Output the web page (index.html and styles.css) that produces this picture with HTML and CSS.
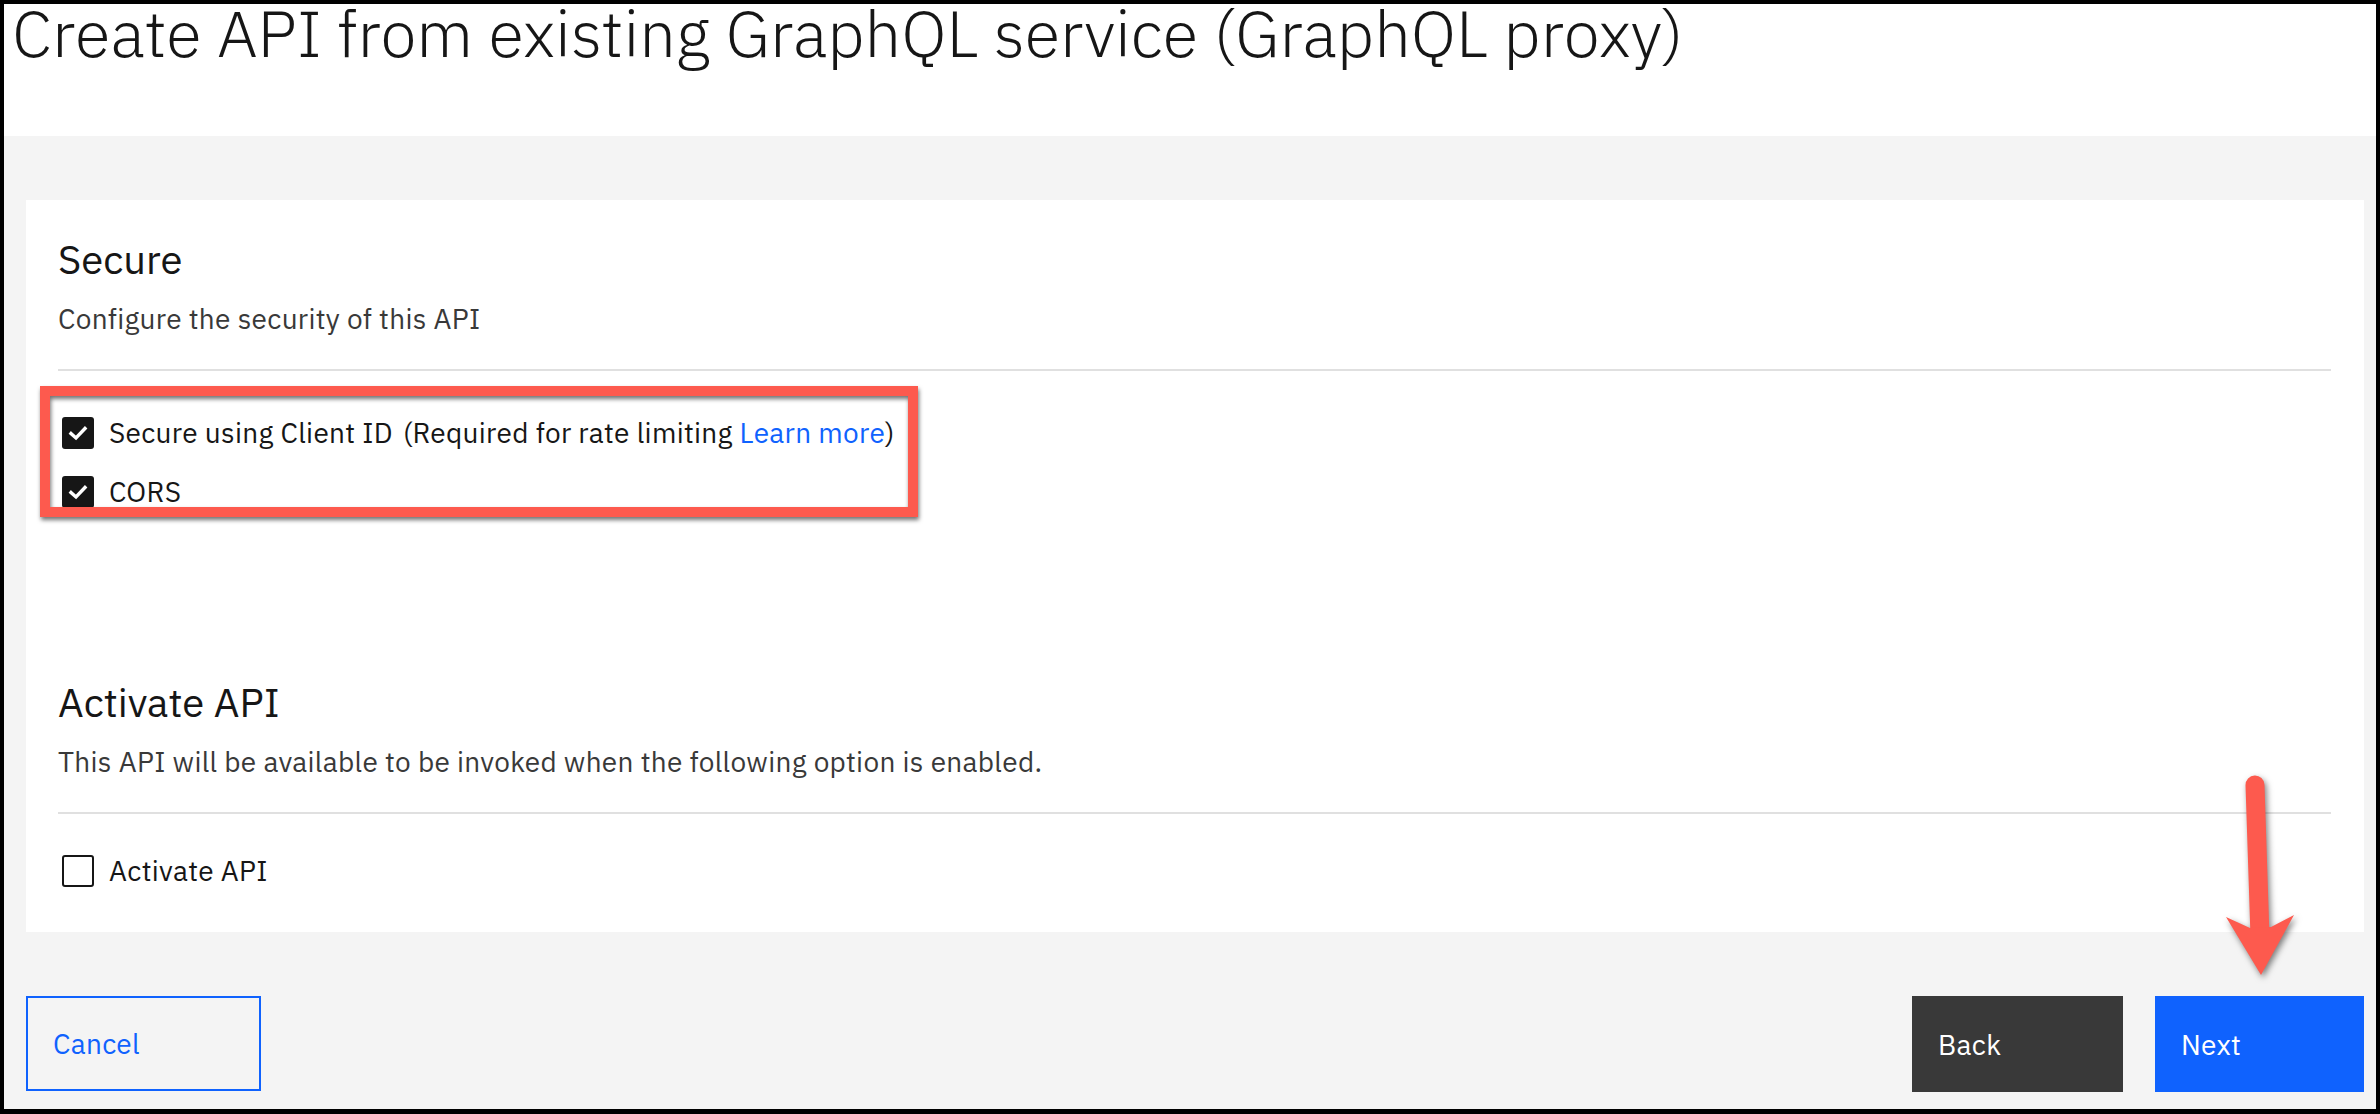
FILE: index.html
```html
<!DOCTYPE html>
<html lang="en">
<head>
<meta charset="utf-8">
<title>Create API from existing GraphQL service (GraphQL proxy)</title>
<link rel="stylesheet" href="styles.css">
</head>
<body>
<div class="frame">
  <header class="header">
    <h1 class="title">Create API from existing GraphQL service (GraphQL proxy)</h1>
  </header>
  <main class="main">
    <section class="card">
      <div class="section">
        <h2 class="heading">Secure</h2>
        <p class="desc">Configure the security of this API</p>
        <hr class="rule">
        <div class="options">
          <label class="check">
            <span class="box checked"><svg viewBox="0 0 32 32" width="32" height="32"><polyline points="9,16.5 14,21 23,11.5" fill="none" stroke="#fff" stroke-width="3.4" stroke-linecap="square"/></svg></span>
            <span class="label-text">Secure using Client ID<span class="note">(Required for rate limiting <a class="link" href="#">Learn more</a>)</span></span>
          </label>
          <label class="check">
            <span class="box checked"><svg viewBox="0 0 32 32" width="32" height="32"><polyline points="9,16.5 14,21 23,11.5" fill="none" stroke="#fff" stroke-width="3.4" stroke-linecap="square"/></svg></span>
            <span class="label-text">CORS</span>
          </label>
        </div>
      </div>
      <div class="section section-two">
        <h2 class="heading">Activate API</h2>
        <p class="desc">This API will be available to be invoked when the following option is enabled.</p>
        <hr class="rule">
        <div class="options options-two">
          <label class="check">
            <span class="box"></span>
            <span class="label-text">Activate API</span>
          </label>
        </div>
      </div>
    </section>
    <div class="actions">
      <button class="btn btn-ghost" type="button">Cancel</button>
      <div class="actions-right">
        <button class="btn btn-secondary" type="button">Back</button>
        <button class="btn btn-primary" type="button">Next</button>
      </div>
    </div>
  </main>
  <div class="highlight"></div>
  <svg class="arrow" width="90" height="225" viewBox="0 0 90 225">
    <line x1="35" y1="20" x2="40" y2="172" stroke="#fd5a4e" stroke-width="19" stroke-linecap="round"/>
    <polygon points="6,152 30,163 51,162 74,150 41,210" fill="#fd5a4e"/>
  </svg>
</div>
</body>
</html>
```

FILE: styles.css
```css
* { box-sizing: border-box; }

html, body {
  margin: 0;
  padding: 0;
  background: #000;
}

body {
  font-family: "IBM Plex Sans", Roboto, "Liberation Sans", sans-serif;
  color: #161616;
}

.frame {
  position: relative;
  width: 2380px;
  height: 1114px;
  border-style: solid;
  border-color: #000;
  border-width: 4px 4px 5px 4px;
  display: flex;
  flex-direction: column;
  background: #f4f4f4;
}

.header {
  height: 132px;
  background: #fff;
  padding-left: 8px;
}

.title {
  margin: 0;
  font-size: 65px;
  font-weight: 300;
  line-height: 57px;
  color: #161616;
  letter-spacing: 0;
}

.main {
  flex: 1;
  display: flex;
  flex-direction: column;
  padding: 64px 12px 17px 22px;
}

.card {
  background: #fff;
  height: 732px;
  padding: 35px 33px 0 32px;
}

.heading {
  margin: 0;
  font-size: 40px;
  font-weight: 400;
  line-height: 48px;
  color: #161616;
}

.desc {
  margin: 20px 0 0 0;
  font-size: 28px;
  line-height: 32px;
  color: #393939;
  letter-spacing: 0.3px;
}

.rule {
  margin: 34px 0 0 0;
  border: 0;
  height: 2px;
  background: #e0e0e0;
}

.options {
  display: flex;
  flex-direction: column;
  gap: 27px;
  margin-top: 46px;
}

.options-two {
  margin-top: 41px;
}

.check {
  display: flex;
  align-items: center;
  height: 32px;
  padding-left: 4px;
}

.box {
  width: 32px;
  height: 32px;
  border: 2px solid #161616;
  border-radius: 3px;
  flex: none;
  display: flex;
  align-items: center;
  justify-content: center;
}

.box.checked {
  background: #161616;
  border: 0;
}

.label-text {
  margin-left: 15px;
  font-size: 28px;
  line-height: 32px;
  color: #161616;
  letter-spacing: 0.3px;
}

.note { margin-left: 10px; }

.link {
  color: #0f62fe;
  text-decoration: none;
}

.section-two {
  margin-top: 170px;
}

.actions {
  margin-top: 64px;
  height: 96px;
  display: flex;
  justify-content: space-between;
}

.actions-right {
  display: flex;
  gap: 32px;
}

.btn {
  height: 96px;
  font-family: inherit;
  font-size: 28px;
  letter-spacing: 0.3px;
  text-align: left;
  padding: 0 0 0 26px;
  border: 0;
  display: flex;
  align-items: center;
  cursor: pointer;
}

.btn-ghost {
  width: 235px;
  height: 95px;
  background: transparent;
  border: 2px solid #0f62fe;
  color: #0f62fe;
  padding-left: 25px;
}

.btn-secondary {
  width: 211px;
  background: #393939;
  color: #fff;
}

.btn-primary {
  width: 209px;
  background: #0f62fe;
  color: #fff;
}

.highlight {
  position: absolute;
  left: 36px;
  top: 382px;
  width: 878px;
  height: 131px;
  border: 10px solid #fd5a4e;
  filter: drop-shadow(1px 3px 2px rgba(0, 0, 0, 0.55));
}

.arrow {
  position: absolute;
  left: 2216px;
  top: 761px;
  filter: drop-shadow(2px 3px 3px rgba(0, 0, 0, 0.5));
}
```
